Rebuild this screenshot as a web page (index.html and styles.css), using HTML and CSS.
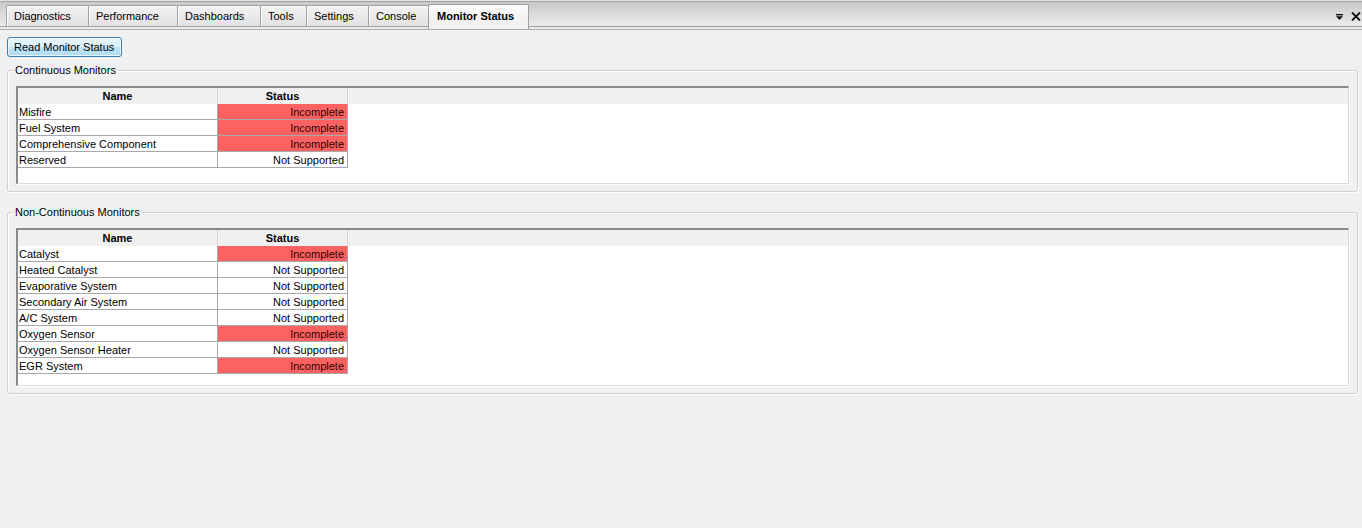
FILE: index.html
```html
<!DOCTYPE html>
<html>
<head>
<meta charset="utf-8">
<link rel="stylesheet" href="styles.css">
</head>
<body>
<div class="topbar">
  <div class="strip">
    <div class="tabs">
      <div class="tab t1">Diagnostics</div>
      <div class="tab t2">Performance</div>
      <div class="tab t3">Dashboards</div>
      <div class="tab t4">Tools</div>
      <div class="tab t5">Settings</div>
      <div class="tab t6">Console</div>
      <div class="tab t7 active">Monitor Status</div>
    </div>
    <div class="win-icons">
      <svg class="ico-menu" width="7" height="6" viewBox="0 0 7 6"><rect x="0" y="0" width="7" height="1.4" fill="#111"/><polygon points="0,2.3 7,2.3 3.5,6" fill="#111"/></svg>
      <svg class="ico-close" width="10" height="9" viewBox="0 0 10 9"><path d="M1 0.5 L9 8.5 M9 0.5 L1 8.5" stroke="#111" stroke-width="1.8"/></svg>
    </div>
  </div>
  <div class="stripbase"></div>
</div>

<div class="content">
  <button class="btn">Read Monitor Status</button>

  <fieldset class="group">
    <legend>Continuous Monitors</legend>
    <div class="grid g1">
      <div class="row head"><div class="c name">Name</div><div class="c status">Status</div><div class="fill"></div></div>
      <div class="row"><div class="c name">Misfire</div><div class="c status bad">Incomplete</div></div>
      <div class="row"><div class="c name">Fuel System</div><div class="c status bad">Incomplete</div></div>
      <div class="row"><div class="c name">Comprehensive Component</div><div class="c status bad">Incomplete</div></div>
      <div class="row"><div class="c name">Reserved</div><div class="c status">Not Supported</div></div>
    </div>
  </fieldset>

  <fieldset class="group second">
    <legend>Non-Continuous Monitors</legend>
    <div class="grid g2">
      <div class="row head"><div class="c name">Name</div><div class="c status">Status</div><div class="fill"></div></div>
      <div class="row"><div class="c name">Catalyst</div><div class="c status bad">Incomplete</div></div>
      <div class="row"><div class="c name">Heated Catalyst</div><div class="c status">Not Supported</div></div>
      <div class="row"><div class="c name">Evaporative System</div><div class="c status">Not Supported</div></div>
      <div class="row"><div class="c name">Secondary Air System</div><div class="c status">Not Supported</div></div>
      <div class="row"><div class="c name">A/C System</div><div class="c status">Not Supported</div></div>
      <div class="row"><div class="c name">Oxygen Sensor</div><div class="c status bad">Incomplete</div></div>
      <div class="row"><div class="c name">Oxygen Sensor Heater</div><div class="c status">Not Supported</div></div>
      <div class="row"><div class="c name">EGR System</div><div class="c status bad">Incomplete</div></div>
    </div>
  </fieldset>
</div>
</body>
</html>
```

FILE: styles.css
```css
* { box-sizing: border-box; }
html, body { margin: 0; padding: 0; }
body {
  background: #f0f0f0;
  font-family: "Liberation Sans", Arial, sans-serif;
  font-size: 11px;
  color: #000;
  width: 1362px;
  height: 528px;
  overflow: hidden;
}

/* ---------- tab strip ---------- */
.topbar { border-top: 1px solid #e4e4e4; }
.strip {
  height: 26px;
  border-top: 1px solid #a4a4a4;
  border-bottom: 1px solid #a0a0a0;
  background: linear-gradient(#c8c8c8, #ececec);
  display: flex;
  align-items: flex-end;
  justify-content: space-between;
}
.stripbase {
  height: 3px;
  background: #ececec;
  border-bottom: 1px solid #ababab;
}
.tabs {
  display: flex;
  align-items: flex-end;
  padding-left: 6px;
  height: 100%;
}
.tab {
  height: 21px;
  line-height: 20px;
  padding-left: 7px;
  margin-right: -1px;
  border: 1px solid #a0a0a0;
  border-bottom: none;
  border-radius: 2px 2px 0 0;
  background: linear-gradient(#f2f2f2, #e2e2e2);
  box-shadow: inset 1px 1px 0 #fbfbfb;
  white-space: nowrap;
}
.t1 { width: 83px; }
.t2 { width: 90px; }
.t3 { width: 84px; }
.t4 { width: 47px; }
.t5 { width: 63px; }
.t6 { width: 61px; }
.tab.active {
  width: 101px;
  height: 25px;
  margin-bottom: -3px;
  padding-left: 8px;
  line-height: 22px;
  font-weight: bold;
  background: linear-gradient(#fbfbfb, #f2f2f2 60%, #f0f0f0);
  box-shadow: none;
  position: relative;
  z-index: 1;
}
.win-icons {
  display: flex;
  align-items: center;
  gap: 8px;
  padding-right: 1px;
  height: 100%;
}
.ico-menu { margin-top: 5px; }
.ico-close { margin-top: 4px; }

/* ---------- content ---------- */
.content { padding: 7px 4px 0 7px; }
.btn {
  display: block;
  width: 115px;
  height: 20px;
  padding: 0 0 0 6px;
  text-align: left;
  font-family: inherit;
  font-size: 11px;
  color: #000;
  border: 1px solid #3c7fb1;
  border-radius: 3px;
  background: linear-gradient(#e8f5fc, #d9f0fc 48%, #bfe4f8 52%, #b0dcf4);
  box-shadow: inset 0 0 0 1px rgba(255,255,255,0.7);
}

.group {
  margin: 7px 0 0 0;
  padding: 9px 8px 7px 8px;
  border: 1px solid #d0d0d0;
  border-radius: 3px;
  box-shadow: inset 1px 1px 0 #ffffff, 1px 1px 0 #ffffff;
  min-width: 0;
}
.group.second { margin-top: 14px; }
.group legend {
  padding: 0 1px;
  margin-left: -2px;
  line-height: 13px;
  color: #000;
}

.grid {
  background: #fff;
  border-top: 2px solid #8a8a8a;
  border-left: 2px solid #8a8a8a;
  border-right: 1px solid #dadada;
  border-bottom: 1px solid #dadada;
  box-shadow: 1px 1px 0 #fff;
}
.g1 { height: 98px; }
.g2 { height: 158px; }
.row { display: flex; height: 16px; }
.c {
  height: 16px;
  line-height: 15px;
  padding-top: 1px;
  border-right: 1px solid #a8a8a8;
  border-bottom: 1px solid #a8a8a8;
  white-space: nowrap;
  overflow: hidden;
}
.c.name { width: 200px; padding-left: 1px; }
.c.status { width: 130px; text-align: right; padding-right: 3px; }
.row.head { background: #f0f0f0; }
.row.head .c {
  font-weight: bold;
  text-align: center;
  padding: 1px 0 0 0;
  border-right-color: #d5d5d5;
  border-bottom: none;
}
.row.head .fill { flex: 1; }
.c.bad { background: #fd6262; color: #2b0000; }
```
